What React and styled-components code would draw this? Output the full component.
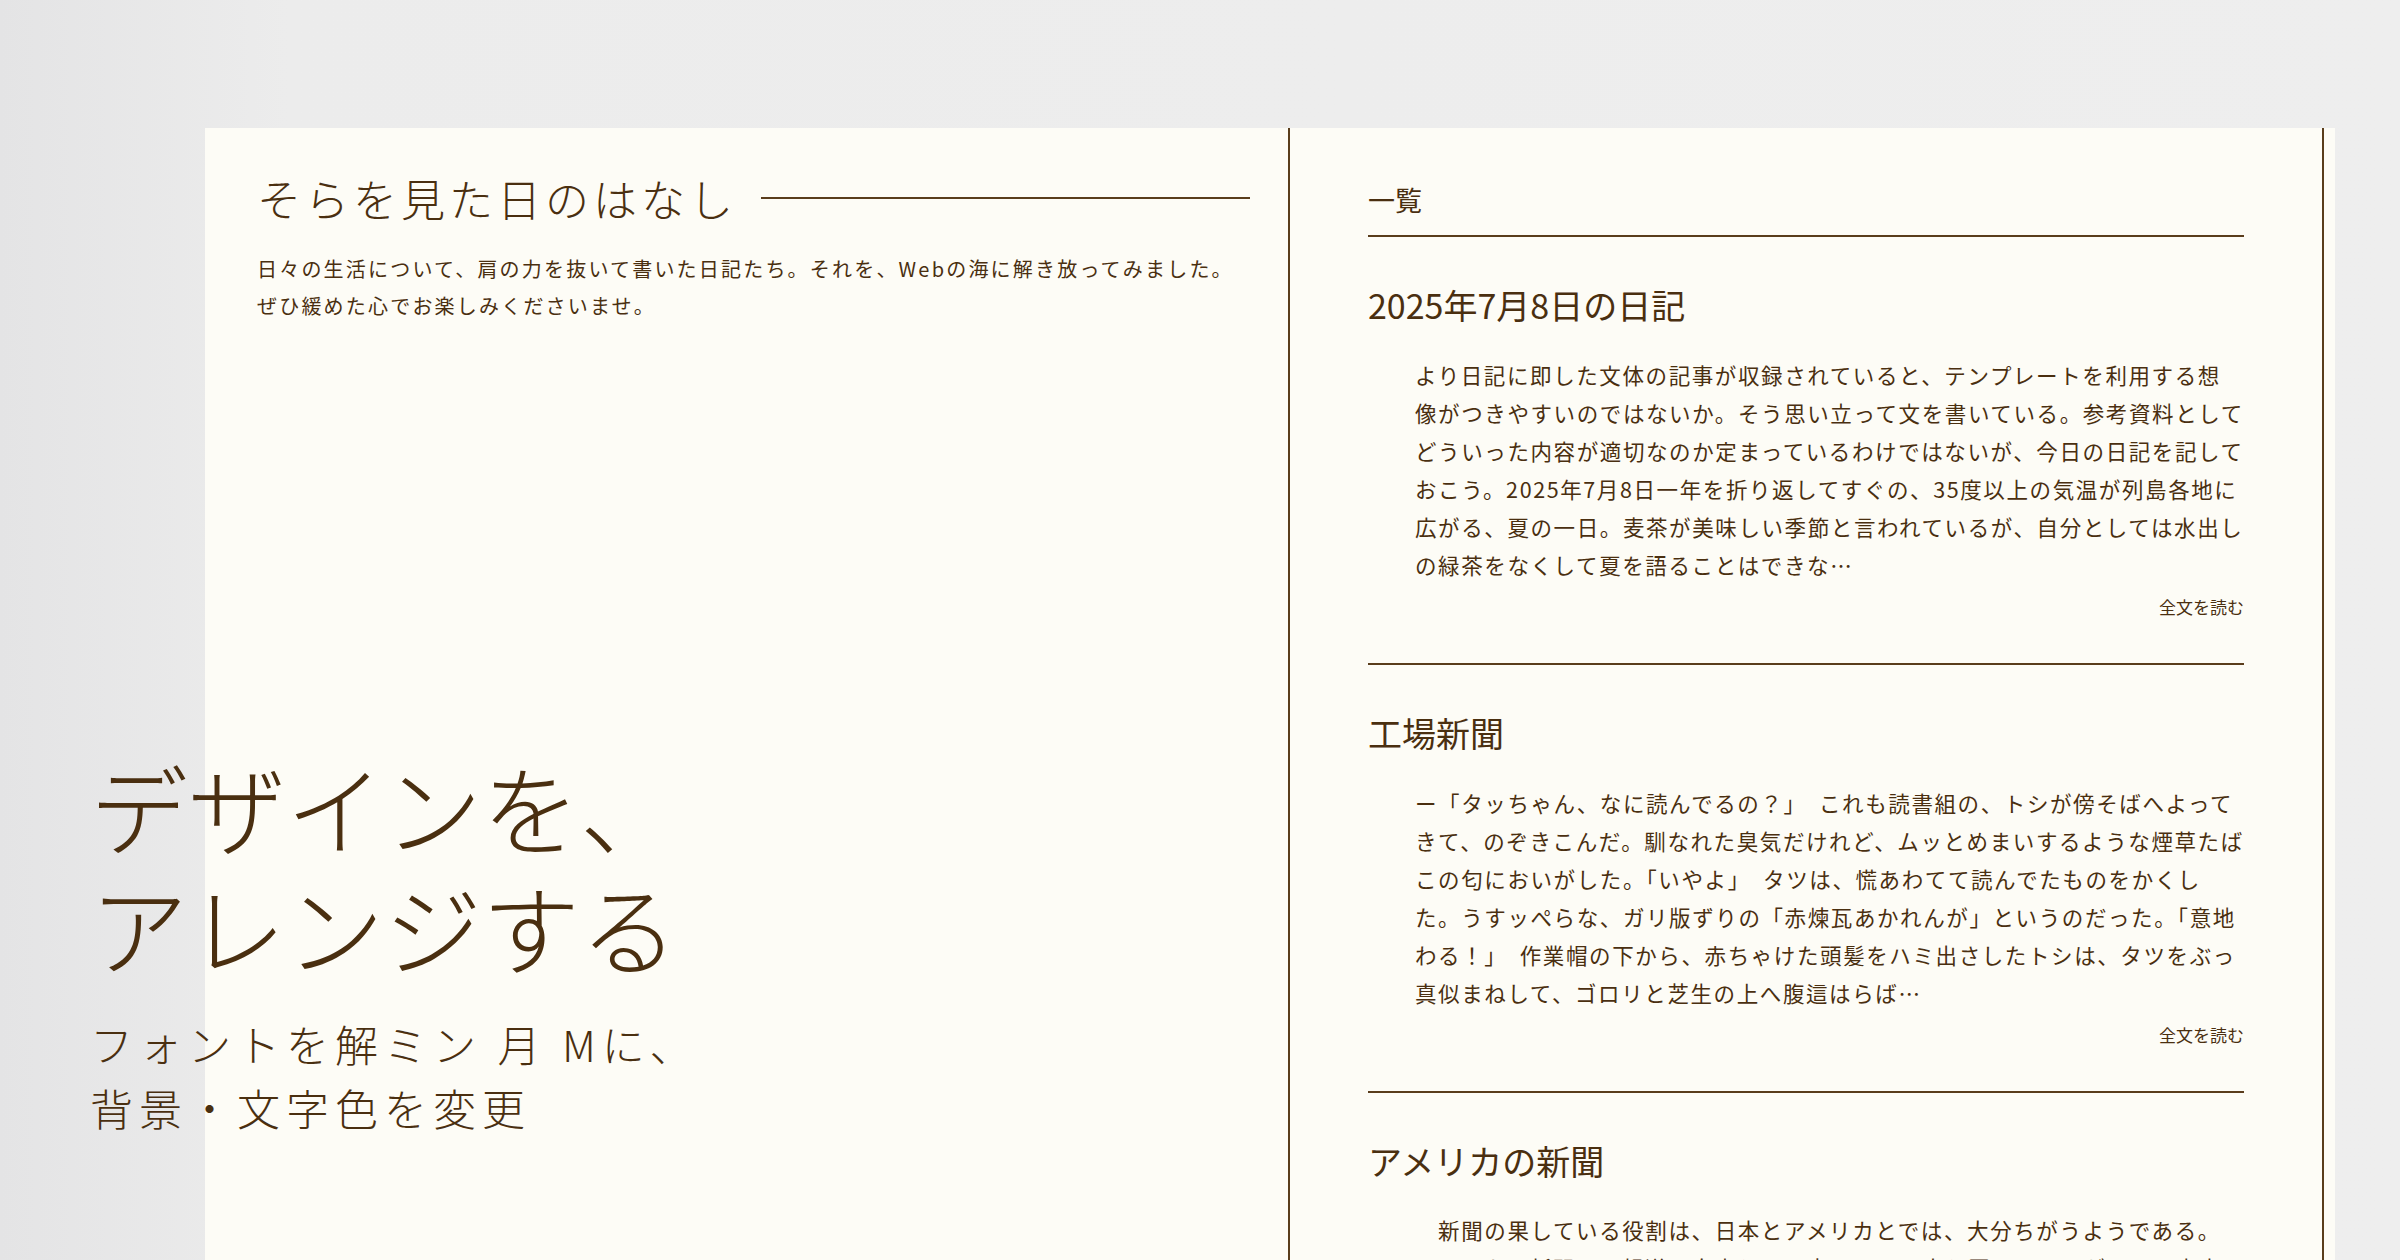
import React from "react";
import styled, { createGlobalStyle } from "styled-components";

const Global = createGlobalStyle`
  html, body { margin: 0; padding: 0; }
  body {
    width: 2400px;
    height: 1260px;
    overflow: hidden;
    background: linear-gradient(90deg, #e4e4e5 0%, #ececec 12%, #eeeeee 100%);
    font-family: "Noto Sans CJK JP", "Noto Sans", sans-serif;
    color: #4a2f10;
  }
`;

const Stage = styled.div`
  position: relative;
  width: 2400px;
  height: 1260px;
  padding-top: 128px;
  box-sizing: border-box;
  overflow: hidden;
`;

const Card = styled.div`
  margin-left: 205px;
  width: 2130px;
  height: 1132px;
  background: #fdfcf6;
  display: grid;
  grid-template-columns: 1085px 1034px 11px;
`;

const LeftCol = styled.section`
  border-right: 2px solid #5a3d1c;
  padding: 38px 38px 0 52px;
`;

const TitleRow = styled.div`
  display: flex;
  align-items: center;
  gap: 24px;
`;

const SiteTitle = styled.h1`
  margin: 0;
  font-size: 44px;
  font-weight: 300;
  letter-spacing: 4px;
  white-space: nowrap;
`;

const Rule = styled.div`
  flex: 1;
  height: 2px;
  background: #5a3d1c;
`;

const Lead = styled.p`
  margin: 20px 0 0;
  font-size: 20px;
  line-height: 37px;
  letter-spacing: 2.2px;
`;

const RightCol = styled.section`
  padding: 52px 78px 0 78px;
  border-right: 2px solid #5a3d1c;
`;

const ListHead = styled.h2`
  margin: 0;
  font-size: 27px;
  font-weight: 400;
  padding-bottom: 16px;
  border-bottom: 2px solid #5a3d1c;
`;

const Article = styled.article`
  padding: 48px 0 44px;
  border-bottom: ${(p) => (p.last ? "none" : "2px solid #5a3d1c")};
`;

const ArticleTitle = styled.h3`
  margin: 0;
  font-size: 34px;
  font-weight: 400;
  line-height: 1.2;
`;

const Body = styled.p`
  margin: 30px 0 0 47px;
  font-size: 21.5px;
  line-height: 38px;
  letter-spacing: 1.6px;
`;

const More = styled.div`
  text-align: right;
  font-size: 17px;
  margin-top: 10px;
`;

const Overlay = styled.div`
  position: absolute;
  left: 90px;
  top: 745px;
  pointer-events: none;
`;

const Catch = styled.div`
  font-size: 98px;
  font-weight: 300;
  line-height: 120px;
  letter-spacing: 0;
`;

const Sub = styled.div`
  margin-top: 26px;
  font-size: 43px;
  font-weight: 300;
  line-height: 64px;
  letter-spacing: 6px;
`;

const articles = [
  {
    title: "2025年7月8日の日記",
    body: "より日記に即した文体の記事が収録されていると、テンプレートを利用する想像がつきやすいのではないか。そう思い立って文を書いている。参考資料としてどういった内容が適切なのか定まっているわけではないが、今日の日記を記しておこう。2025年7月8日一年を折り返してすぐの、35度以上の気温が列島各地に広がる、夏の一日。麦茶が美味しい季節と言われているが、自分としては水出しの緑茶をなくして夏を語ることはできな…",
  },
  {
    title: "工場新聞",
    body: "ー「タッちゃん、なに読んでるの？」　これも読書組の、トシが傍そばへよってきて、のぞきこんだ。馴なれた臭気だけれど、ムッとめまいするような煙草たばこの匂においがした。「いやよ」　タツは、慌あわてて読んでたものをかくした。うすッぺらな、ガリ版ずりの「赤煉瓦あかれんが」というのだった。「意地わる！」　作業帽の下から、赤ちゃけた頭髪をハミ出さしたトシは、タツをぶっ真似まねして、ゴロリと芝生の上へ腹這はらば…",
  },
  {
    title: "アメリカの新聞",
    body: "　新聞の果している役割は、日本とアメリカとでは、大分ちがうようである。アメリカの新聞は、報道の自由という点では、日本と同じであるが、その内容には大きなちがいがあるように思われる。",
  },
];

export default function App() {
  return (
    <Stage>
      <Global />
      <Card>
        <LeftCol>
          <TitleRow>
            <SiteTitle>そらを見た日のはなし</SiteTitle>
            <Rule />
          </TitleRow>
          <Lead>
            日々の生活について、肩の力を抜いて書いた日記たち。それを、Webの海に解き放ってみました。ぜひ緩めた心でお楽しみくださいませ。
          </Lead>
        </LeftCol>
        <RightCol>
          <ListHead>一覧</ListHead>
          {articles.map((a, i) => (
            <Article key={a.title} last={i === articles.length - 1}>
              <ArticleTitle>{a.title}</ArticleTitle>
              <Body>{a.body}</Body>
              {i < articles.length - 1 && <More>全文を読む</More>}
            </Article>
          ))}
        </RightCol>
        <div />
      </Card>
      <Overlay>
        <Catch>
          デザインを、
          <br />
          アレンジする
        </Catch>
        <Sub>
          フォントを解ミン 月 Mに、
          <br />
          背景・文字色を変更
        </Sub>
      </Overlay>
    </Stage>
  );
}
